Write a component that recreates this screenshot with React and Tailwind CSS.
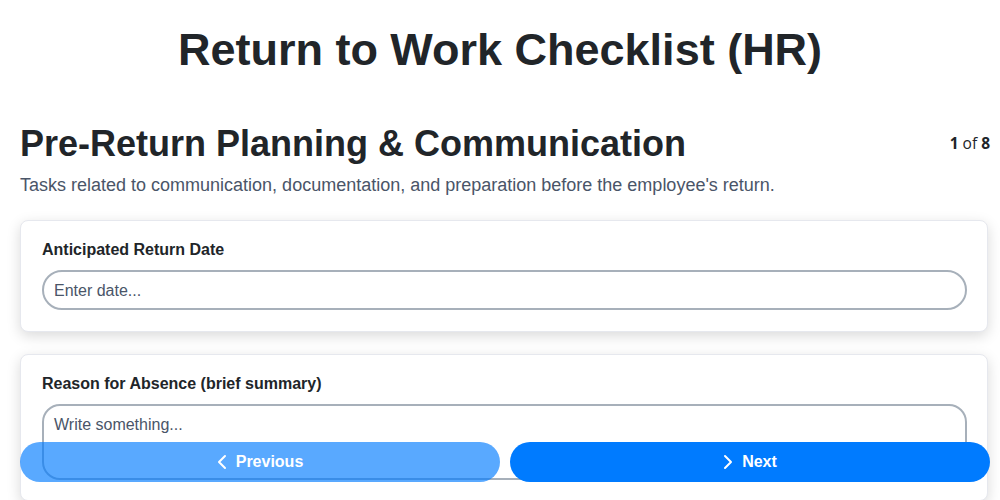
import React from "react";

function ChevronLeft() {
  return (
    <svg width="10" height="16" viewBox="0 0 10 16" fill="none" stroke="currentColor" strokeWidth="2" strokeLinecap="round" strokeLinejoin="round">
      <polyline points="8,2 2,8 8,14" />
    </svg>
  );
}

function ChevronRight() {
  return (
    <svg width="10" height="16" viewBox="0 0 10 16" fill="none" stroke="currentColor" strokeWidth="2" strokeLinecap="round" strokeLinejoin="round">
      <polyline points="2,2 8,8 2,14" />
    </svg>
  );
}

export default function App() {
  return (
    <div className="min-h-[500px] bg-white text-[#212529]" style={{ fontFamily: '"Liberation Sans", Arial, sans-serif' }}>
      <h1 className="pt-[23px] text-center text-[45px] font-bold leading-[54px]">Return to Work Checklist (HR)</h1>
      <div className="pl-5 pr-[10px] mt-[45px]">
        <div className="flex items-center justify-between">
          <h2 className="text-[36px] font-bold leading-[43px]">Pre-Return Planning &amp; Communication</h2>
          <div className="text-[15.5px]" style={{ fontFamily: '"Open Sans", sans-serif' }}>
            <span className="font-bold">1</span> of <span className="font-bold">8</span>
          </div>
        </div>
        <p className="mt-[7px] text-[18px] leading-[27px] text-[#4a5568]">
          Tasks related to communication, documentation, and preparation before the employee's return.
        </p>
        <div className="mt-[21px] mr-[2px] flex flex-col gap-[22px]">
          <div className="rounded-lg border border-[#e6e8ee] bg-white pl-[21px] pr-5 pt-[17px] pb-[21px] shadow-[0_4px_14px_rgba(0,0,0,0.15)]">
            <div className="mb-2 text-base font-bold leading-6">Anticipated Return Date</div>
            <div className="flex h-10 items-center rounded-full border-2 border-[#a7b0ba] px-[10px] pt-[1px] text-base text-[#4a5568]">
              Enter date...
            </div>
          </div>
          <div className="rounded-lg border border-[#e6e8ee] bg-white pl-[21px] pr-5 pt-[17px] pb-5 shadow-[0_4px_14px_rgba(0,0,0,0.15)]">
            <div className="mb-2 text-base font-bold leading-6">Reason for Absence (brief summary)</div>
            <div className="h-[76px] rounded-[18px] border-2 border-[#a7b0ba] px-[10px] pt-[7px] text-base leading-6 text-[#4a5568]">
              Write something...
            </div>
          </div>
        </div>
      </div>
      <div className="fixed bottom-[18px] left-5 right-[10px] flex gap-[10px]">
        <button className="flex h-10 flex-1 items-center justify-center gap-[9px] rounded-full bg-[#007bff] text-base font-bold text-white opacity-65">
          <ChevronLeft />
          <span>Previous</span>
        </button>
        <button className="flex h-10 flex-1 items-center justify-center gap-[9px] rounded-full bg-[#007bff] text-base font-bold text-white">
          <ChevronRight />
          <span>Next</span>
        </button>
      </div>
    </div>
  );
}
